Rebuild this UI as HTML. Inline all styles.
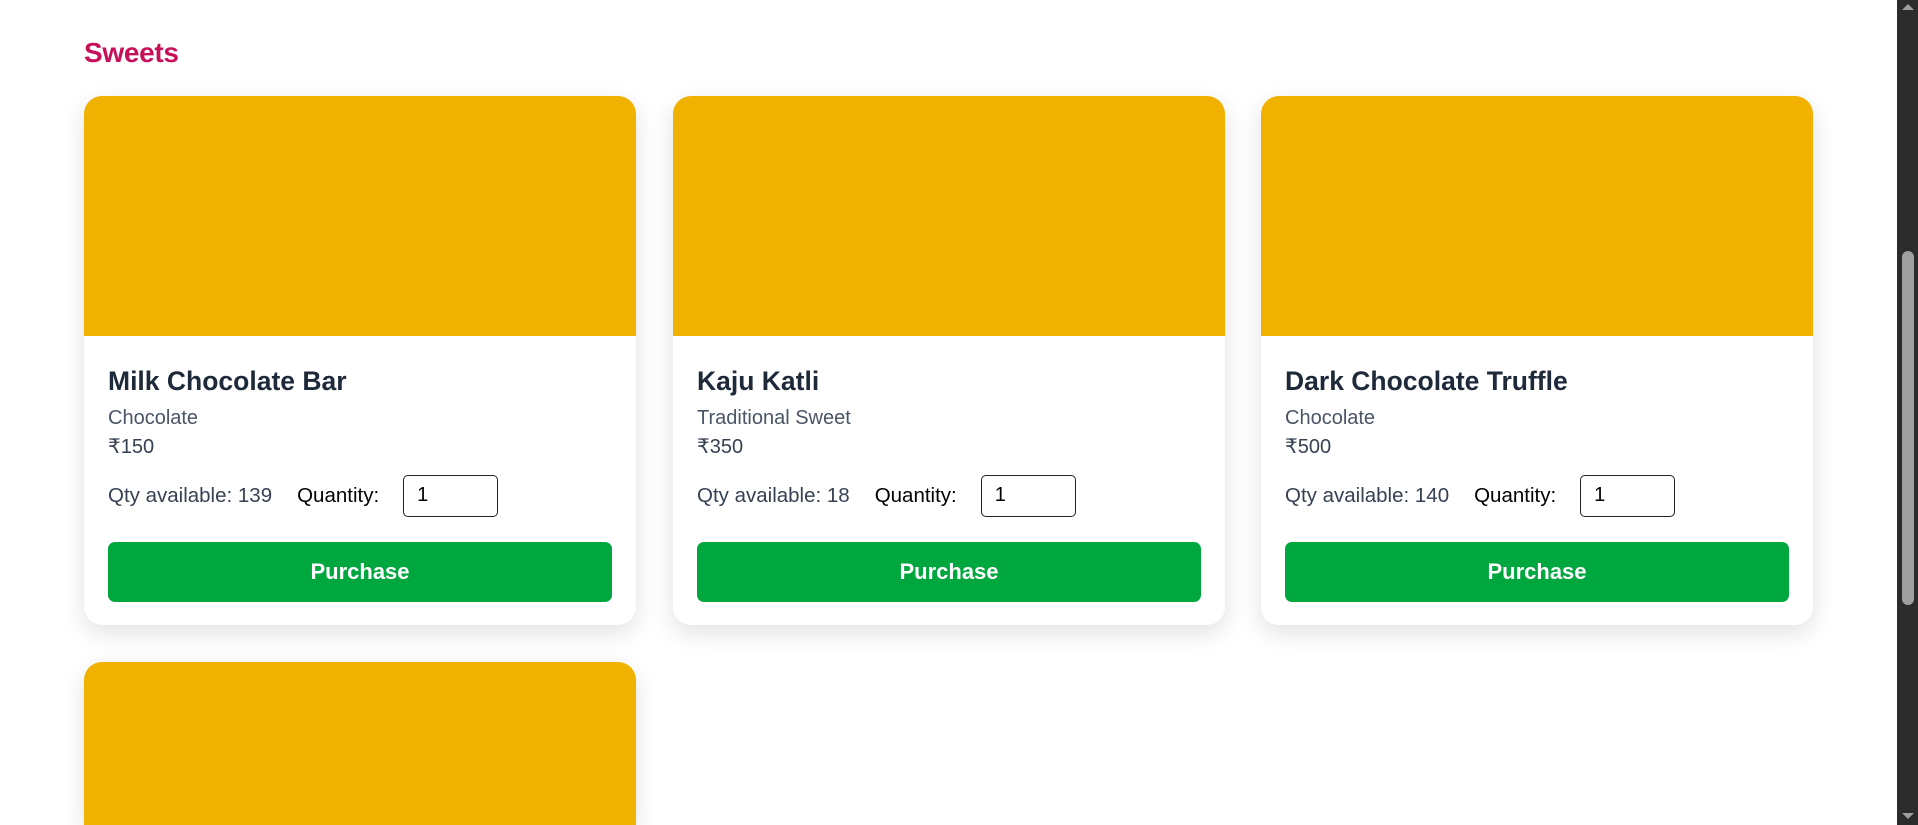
<!DOCTYPE html>
<html style="height:825px;overflow:hidden"><head><meta charset="utf-8"><style>
*{box-sizing:border-box;margin:0;padding:0}
body{width:1918px;height:825px;overflow:hidden;background:#fff;font-family:"Liberation Sans",sans-serif;position:relative}
h2{position:absolute;left:84px;top:37px;font-size:28px;font-weight:bold;color:#c8105a;letter-spacing:-0.3px}
.card{position:absolute;width:552px;height:529px;background:#fff;border-radius:18px;box-shadow:0 8px 24px rgba(0,0,0,0.12);overflow:hidden}
.img{height:240px;background:#f0b100}
.t{position:absolute;left:24px;top:269px;font-size:26.5px;line-height:32px;font-weight:bold;color:#1e2939}
.c{position:absolute;left:24px;top:310px;font-size:20px;line-height:24px;color:#4a5565}
.p{position:absolute;left:24px;top:339px;font-size:20px;line-height:24px;color:#364153}
.row{position:absolute;left:24px;top:379px;height:42px;display:flex;align-items:center;font-size:20.5px}
.qa{color:#364153;margin-right:25px}
.ql{color:#000;margin-right:24px}
.in{width:95px;height:42px;border:1.5px solid #222;border-radius:5px;padding-left:13px;line-height:39px;font-size:20px;color:#000}
.b{position:absolute;left:24px;top:446px;width:504px;height:60px;background:#00a63e;border-radius:7px;color:#fff;font-size:22px;font-weight:bold;text-align:center;line-height:60px}
.sb{position:absolute;left:1897px;top:0;width:21px;height:825px;background:#2b2b2b}
.th{position:absolute;left:5px;top:251px;width:12px;height:354px;background:#9f9f9f;border-radius:6px}
</style></head><body>
<h2>Sweets</h2>
<div class="card" style="left:84px;top:96px"><div class="img"></div><div class="t">Milk Chocolate Bar</div><div class="c">Chocolate</div><div class="p">₹150</div><div class="row"><span class="qa">Qty available: 139</span><span class="ql">Quantity:</span><div class="in">1</div></div><div class="b">Purchase</div></div>
<div class="card" style="left:673px;top:96px"><div class="img"></div><div class="t">Kaju Katli</div><div class="c">Traditional Sweet</div><div class="p">₹350</div><div class="row"><span class="qa">Qty available: 18</span><span class="ql">Quantity:</span><div class="in">1</div></div><div class="b">Purchase</div></div>
<div class="card" style="left:1261px;top:96px"><div class="img"></div><div class="t">Dark Chocolate Truffle</div><div class="c">Chocolate</div><div class="p">₹500</div><div class="row"><span class="qa">Qty available: 140</span><span class="ql">Quantity:</span><div class="in">1</div></div><div class="b">Purchase</div></div>
<div class="card" style="left:84px;top:662px;height:163px;border-radius:18px 18px 0 0"><div class="img" style="height:163px"></div></div>
<div class="sb"><div class="th"></div>
<div style="position:absolute;left:5px;top:4px;width:0;height:0;border-left:6px solid transparent;border-right:6px solid transparent;border-bottom:6px solid #9f9f9f"></div>
<div style="position:absolute;left:5px;top:813px;width:0;height:0;border-left:6px solid transparent;border-right:6px solid transparent;border-top:6px solid #9f9f9f"></div>
</div>
</body></html>
